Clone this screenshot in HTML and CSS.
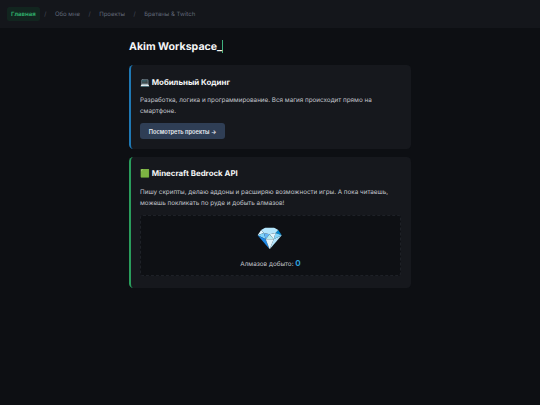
FILE: index.html
```html
<!DOCTYPE html>
<html lang="ru">
<head>
<meta charset="utf-8">
<title>Akim Workspace</title>
<link rel="stylesheet" href="styles.css">
</head>
<body>
<nav class="nav">
  <a class="link active">Главная</a><span class="sep">/</span>
  <a class="link">Обо мне</a><span class="sep">/</span>
  <a class="link">Проекты</a><span class="sep">/</span>
  <a class="link">Братаны &amp; Twitch</a>
</nav>
<main class="main">
  <h1 class="title">Akim Workspace<span class="cursor">_</span></h1>
  <section class="card card-blue">
    <h2 class="card-title">💻 Мобильный Кодинг</h2>
    <p class="card-text">Разработка, логика и программирование. Вся магия происходит прямо на смартфоне.</p>
    <button class="btn">Посмотреть проекты →</button>
  </section>
  <section class="card card-green">
    <h2 class="card-title">🟩 Minecraft Bedrock API</h2>
    <p class="card-text">Пишу скрипты, делаю аддоны и расширяю возможности игры. А пока читаешь, можешь покликать по руде и добыть алмазов!</p>
    <div class="game">
      <div class="gem">💎</div>
      <div class="score">Алмазов добыто: <span class="count">0</span></div>
    </div>
  </section>
</main>
</body>
</html>
```
FILE: styles.css
```css
* { box-sizing: border-box; }
html, body { margin: 0; height: 100%; }
body {
  background: #0d0f13;
  color: #fff;
  font-family: Inter, "Liberation Sans", "Noto Color Emoji", sans-serif;
  text-rendering: geometricPrecision;
}
.nav {
  height: 28px;
  background: #14161b;
  display: flex;
  align-items: center;
  padding-left: 7px;
  font-size: 6px;
}
.link { color: #616878; padding: 2.5px 4px; border-radius: 2.5px; font-weight: 400; line-height: 9px; }
.link.active { color: #2ea868; background: #12251f; font-weight: 700; }
.sep { color: #4a4f5c; margin: 0 4.5px; }
.main { width: 282px; margin: 0 auto; padding-top: 12px; }
.title { margin: 0 0 11.3px; font-size: 10.6px; line-height: 14px; font-weight: 700; color: #f4f5f6; }
.cursor { color: #f4f5f6; border-right: 1px solid #3fb27f; }
.card {
  background: #16181d;
  border-radius: 4.5px;
  border-left: 2px solid #1f6fa8;
  padding: 11.5px 10px 10px 9px;
  margin-bottom: 7.7px;
}
.card-blue { border-left-color: #1f78b4; }
.card-green { border-left-color: #2a9d5c; }
.card-title { margin: 0 0 7.2px; font-size: 7.9px; line-height: 11px; font-weight: 700; color: #f4f5f6; }
.card-text { margin: 0 0 6.3px; font-size: 6.3px; line-height: 11px; color: #c4c7cd; }
.btn {
  display: block;
  width: 85px;
  height: 16px;
  border: 0;
  border-radius: 3px;
  background: #2f3e55;
  color: #e8ebf0;
  font: 600 5.7px Inter, "Liberation Sans", sans-serif;
  padding: 0;
}
.game {
  background: #0e1014;
  border: 1px dashed #1e2127;
  border-radius: 3px;
  height: 61px;
  display: flex;
  flex-direction: column;
  align-items: center;
  margin-bottom: 2px;
}
.gem { font-size: 22px; line-height: 26px; margin-top: 10px; }
.score { font-size: 6.3px; line-height: 10px; margin-top: 6px; color: #c4c7cd; }
.count { color: #2f9fd8; font-size: 8px; font-weight: 700; }
```
